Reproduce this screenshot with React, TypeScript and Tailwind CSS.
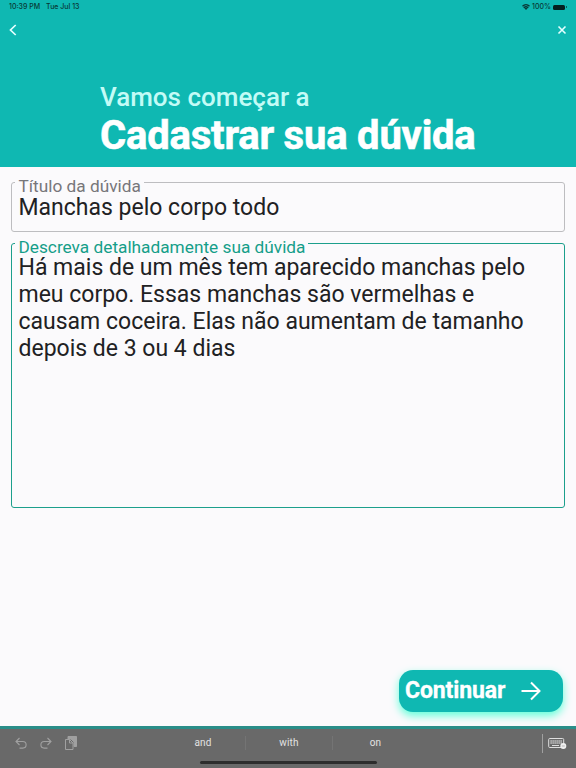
import React from 'react';

const StatusBar: React.FC = () => {
  return (
    <div className="flex h-[14px] items-center justify-between pl-[9px] pr-[9px] font-['Inter'] text-[7px] font-medium leading-[14px] text-[#083836]">
      <div className="flex gap-[6px]">
        <span>10:39 PM</span>
        <span>Tue Jul 13</span>
      </div>
      <div className="flex items-center">
        <svg className="mr-[2px] h-[6px] w-[8px]" viewBox="0 0 16 12" fill="none" stroke="currentColor" strokeWidth="2.800">
          <path d="M1 4.500C5 .5 11 .5 15 4.500M3.600 7.800c2.600-2.500 6.200-2.500 8.800 0" />
          <path d="M8 12 5.400 9.200c1.500-1.300 3.700-1.300 5.200 0z" fill="currentColor" stroke="none" />
        </svg>
        <span>100%</span>
        <span className="ml-[2px] h-[5px] w-[12px] rounded-[1.5px] bg-[#04201f]" />
        <span className="ml-px h-[2px] w-px bg-[#0a5f5b]" />
      </div>
    </div>
  );
};

const Header: React.FC = () => {
  return (
    <header className="h-[167px] shrink-0 bg-[#0fb8b2]">
      <StatusBar />
      <div className="flex h-[31px] items-center justify-between pl-[9px] pr-[9px]">
        <svg className="h-[12px] w-[8px]" viewBox="0 0 8 12" fill="none" stroke="#e4ffff" strokeWidth="1.700">
          <path d="M6.700 1 1.500 6l5.200 5" />
        </svg>
        <svg className="h-[10px] w-[10px]" viewBox="0 0 10 10" fill="none" stroke="#e4ffff" strokeWidth="1.600">
          <path d="m1.500 1.500 7 7m0-7-7 7" />
        </svg>
      </div>
      <div className="pl-[100px] pt-[36px]">
        <p className="text-[26px] font-medium leading-[32px] text-[#c3fbf6]">Vamos começar a</p>
        <h1 className="pt-px text-[40px] font-bold leading-[44px] tracking-[-0.2px] text-white [-webkit-text-stroke:0.6px_white]">
          Cadastrar sua dúvida
        </h1>
      </div>
    </header>
  );
};

const Keyboard: React.FC = () => {
  return (
    <footer className="flex h-[42px] shrink-0 flex-col border-t-[3px] border-[#2a8e89] bg-[#696969]">
      <div className="flex h-[28px] items-center text-[#a0a0a0]">
        <div className="flex w-[161px] items-center gap-[13px] pl-[15px]">
          <svg className="h-[13px] w-[12px]" viewBox="0 0 12 13" fill="none" stroke="currentColor" strokeWidth="1.100">
            <path d="M4.500 1 1 4.500 4.500 8M1 4.500h6.800a3.300 3.300 0 0 1 0 6.600H4.500" />
          </svg>
          <svg className="h-[13px] w-[12px]" viewBox="0 0 12 13" fill="none" stroke="currentColor" strokeWidth="1.100">
            <path d="M7.500 1 11 4.500 7.500 8M11 4.500H4.200a3.300 3.300 0 0 0 0 6.600h3.300" />
          </svg>
          <svg className="h-[14px] w-[12px]" viewBox="0 0 12 14" fill="none" stroke="currentColor" strokeWidth="1">
            <path d="M3 3V.5h8.500v10H9V6L6 3z" fill="currentColor" />
            <path d="M.5 3.500h4L8 7v6.500H.5zM4.500 3.500V7H8" fill="#696969" />
          </svg>
        </div>
        <div className="flex w-[257px] items-center text-center text-[10px] leading-[14px] tracking-[0.15px] text-[#e2e2e2]">
          <span className="w-[85px] border-r border-[#747474]">and</span>
          <span className="w-[87px] border-r border-[#747474]">with</span>
          <span className="w-[85px]">on</span>
        </div>
        <div className="ml-[124px] flex h-[19px] items-center border-l border-[#a0a0a0] pl-[5px]">
          <svg className="h-[13px] w-[19px]" viewBox="0 0 19 13" fill="none" stroke="#dedede">
            <rect x=".7" y="1.500" width="15" height="9" rx="1" />
            <path d="M2.500 4h11.500M2.500 6h11.500" strokeDasharray="1.200 .8" strokeWidth="1.400" />
            <path d="M4 8.500h7" />
            <circle cx="15.300" cy="9" r="3" fill="#f0f0f0" stroke="none" />
            <path d="M13.800 9h3" stroke="#a0a0a0" strokeWidth=".7" />
          </svg>
        </div>
      </div>
      <div className="mx-auto mt-[4px] h-[3px] w-[177px] rounded-full bg-[#2d2d2d]" />
    </footer>
  );
};

export default function App() {
  return (
    <div className="flex h-[768px] w-[576px] flex-col overflow-hidden bg-[#fbfafc] font-['Roboto',sans-serif]">
      <Header />
      <main className="flex flex-1 flex-col pl-[11px] pr-[11px] pt-[11px]">
        <fieldset className="h-[54px] rounded-[3px] border border-[#bdbdc0] pl-[3px]">
          <legend className="h-[8px] whitespace-nowrap pl-[3.5px] pr-[3px] text-[17.25px] leading-[16px] text-[#77767a]">
            Título da dúvida
          </legend>
          <p className="pl-[3.5px] pt-[8px] text-[23px] leading-[27px] text-[#212123]">Manchas pelo corpo todo</p>
        </fieldset>
        <fieldset className="mt-[7px] h-[269px] rounded-[3px] border border-[#1c9f8c] pl-[3px]">
          <legend className="h-[8px] whitespace-nowrap pl-[3.5px] pr-[3px] text-[17.25px] leading-[16px] text-[#159e89]">
            Descreva detalhadamente sua dúvida
          </legend>
          <p className="pl-[3.5px] pt-[7px] text-[23px] leading-[27px] text-[#212123]">
            Há mais de um mês tem aparecido manchas pelo
            <br />
            meu corpo. Essas manchas são vermelhas e
            <br />
            causam coceira. Elas não aumentam de tamanho
            <br />
            depois de 3 ou 4 dias
          </p>
        </fieldset>
        <button className="mb-[14px] mr-[2px] mt-auto flex h-[42px] w-[164px] items-center self-end rounded-[14px] bg-[#0fb8b2] pl-[6px] text-[23px] font-bold tracking-[-0.1px] text-white shadow-[0_4px_8px_#64ffda] [-webkit-text-stroke:0.3px_white]">
          <span>Continuar</span>
          <svg className="ml-[16px] h-[20px] w-[20px]" viewBox="0 0 20 20" fill="none" stroke="currentColor" strokeWidth="2">
            <path d="M.5 10h18M10 1.500l8.500 8.500-8.500 8.500" />
          </svg>
        </button>
      </main>
      <Keyboard />
    </div>
  );
}
